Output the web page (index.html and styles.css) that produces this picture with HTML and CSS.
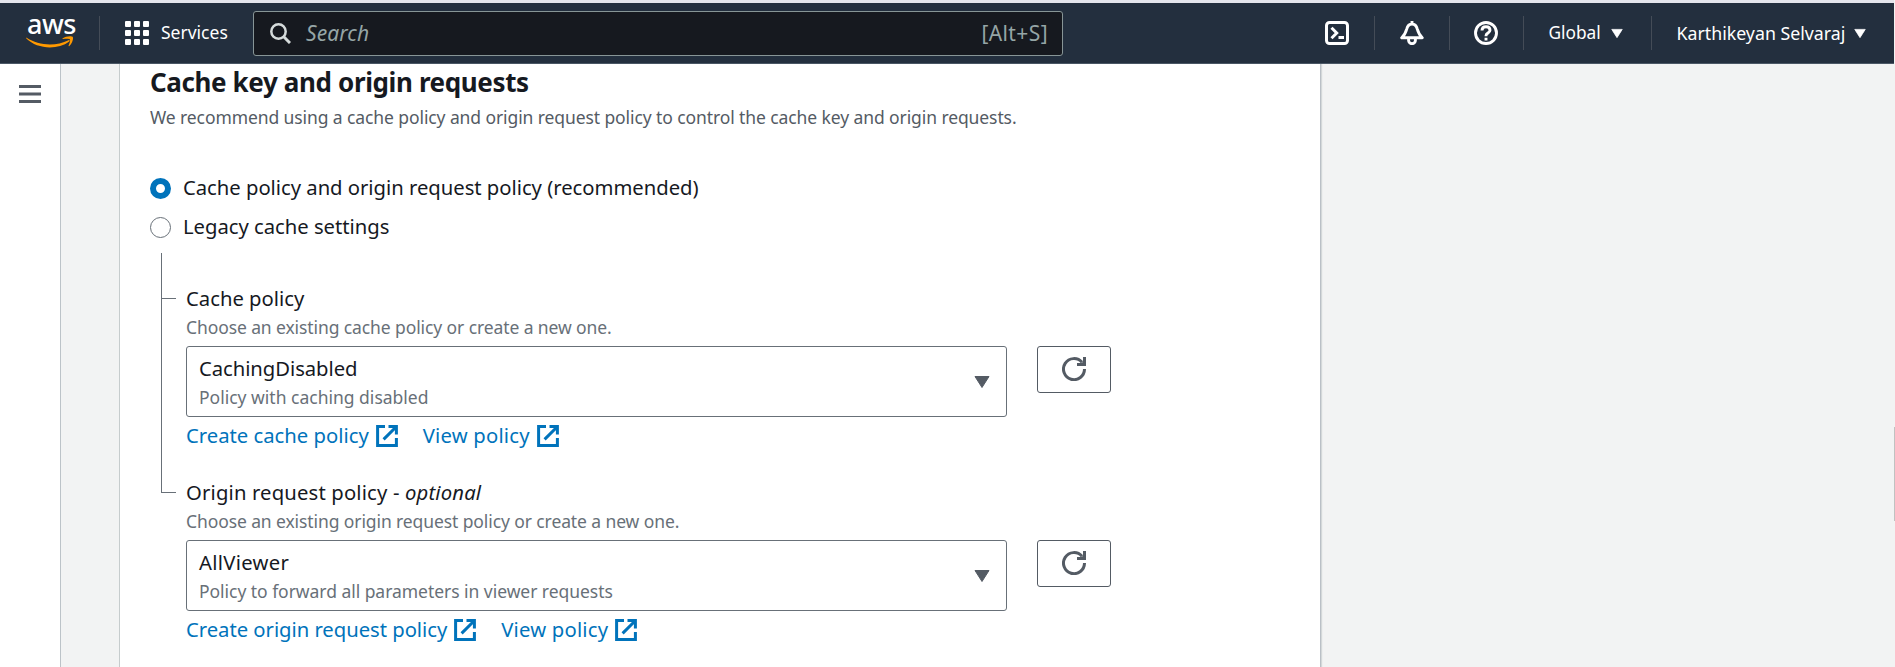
FILE: index.html
```html
<!DOCTYPE html>
<html lang="en">
<head>
<meta charset="utf-8">
<title>Cache key and origin requests</title>
<link rel="stylesheet" href="styles.css">
</head>
<body>
<svg width="0" height="0" class="defs">
  <symbol id="external" viewBox="0 0 22 22"><path d="M9 1.6H1.6V20.4H20.4V13M12.5 1.6h7.9V9.5M20 2L7.6 14.4" fill="none" stroke="currentColor" stroke-width="3"/></symbol>
  <symbol id="refresh" viewBox="0 0 24 24"><path d="M22.5 12A10.5 10.5 0 1 1 20 5.3" fill="none" stroke="currentColor" stroke-width="3"/><path d="M21 0h3v9h-9V6h4l2-1z" fill="currentColor"/></symbol>
  <symbol id="caret" viewBox="0 0 16 12"><path d="M1 .5h14L8 11.5z" fill="currentColor" stroke="currentColor" stroke-linejoin="round"/></symbol>
</svg>
<header class="topbar">
  <div class="logo">
    <span class="logo-text">aws</span>
    <svg class="smile" viewBox="0 18 48 12">
      <path d="M.3 19.5C13 28 30 28.500 42.500 22.200c1-.5 1.700.5.8 1.200C31 32.500 11 31 .3 20.500z" fill="#ff9900"/>
      <path d="M36.500 20.500c3-2.200 9-2.700 10.200-1.500 1.100 1.300-.5 6.500-3.300 9-.5.4-1 .1-.8-.4.900-2 2-5.200 1.300-6.200-.8-1-4.500-.6-6.700-.3-.7.1-1.100-.2-.7-.6z" fill="#ff9900"/>
    </svg>
  </div>
  <span class="sep sep-logo"></span>
  <svg class="apps" viewBox="0 0 24 24" fill="#fff"><rect width="6" height="6" rx="1"/><rect x="9" width="6" height="6" rx="1"/><rect x="18" width="6" height="6" rx="1"/><rect y="9" width="6" height="6" rx="1"/><rect x="9" y="9" width="6" height="6" rx="1"/><rect x="18" y="9" width="6" height="6" rx="1"/><rect y="18" width="6" height="6" rx="1"/><rect x="9" y="18" width="6" height="6" rx="1"/><rect x="18" y="18" width="6" height="6" rx="1"/></svg>
  <span class="services">Services</span>
  <div class="search">
    <svg class="search-icon" viewBox="0 0 21 21" fill="none" stroke="#d5dbdb"><circle cx="8.500" cy="8.500" r="7.200" stroke-width="2.500"/><path d="M13.500 13.500L20 20" stroke-width="3"/></svg>
    <span class="placeholder">Search</span>
    <span class="shortcut">[Alt+S]</span>
  </div>
  <nav class="tools">
    <svg class="tool" viewBox="0 0 24 24" fill="none" stroke="#fff" stroke-width="3"><rect x="1.500" y="1.500" width="21" height="21" rx="3"/><path d="M6.500 6.800L11.700 12l-5.200 5.200M13.500 16.500h5.500"/></svg>
    <span class="sep"></span>
    <svg class="tool" viewBox="0 0 24 24" fill="none" stroke="#fff" stroke-width="2.900"><path d="M12 0v3M1.700 16.800h20.600c-3-2.600-4-5-5-8.600C16.500 5 15 3 12 3S7.500 5 6.700 8.200c-1 3.600-2 6-5 8.600z" stroke-linejoin="round"/><path d="M8.600 17.500v2a3.400 3.200 0 0 0 6.800 0v-2"/></svg>
    <span class="sep"></span>
    <svg class="tool tool-help" viewBox="0 0 24 24" fill="none" stroke="#fff" stroke-width="2.900"><circle cx="12" cy="12" r="10.500"/><path d="M8 9.500C8 7 9.500 5.800 12 5.800s4 1.300 4 3.500c0 2.700-4 2.700-4 5.400v.5M12 16.800v2.700"/></svg>
    <span class="sep"></span>
    <span class="menu global">Global</span><svg class="menu-caret"><use href="#caret"/></svg>
    <span class="sep sep-user"></span>
    <span class="menu user">Karthikeyan Selvaraj</span><svg class="menu-caret"><use href="#caret"/></svg>
  </nav>
</header>
<div class="page">
  <aside class="rail"><svg class="burger" viewBox="0 0 22 18"><path d="M0 1.500h22M0 9h22M0 16.500h22" stroke="#545b64" stroke-width="3"/></svg></aside>
  <main class="panel">
    <h2 class="title">Cache key and origin requests</h2>
    <p class="intro">We recommend using a cache policy and origin request policy to control the cache key and origin requests.</p>
    <div class="option"><span class="radio checked"></span><span>Cache policy and origin request policy (recommended)</span></div>
    <div class="option"><span class="radio"></span><span>Legacy cache settings</span></div>
    <div class="tree">
      <div class="branch"><span class="stem"></span><span class="stem last"></span></div>
      <div class="fields">
        <section class="field">
          <div class="label">Cache policy</div>
          <div class="hint">Choose an existing cache policy or create a new one.</div>
          <div class="row">
            <div class="select"><div><div class="value">CachingDisabled</div><div class="sub">Policy with caching disabled</div></div><svg class="select-caret"><use href="#caret"/></svg></div>
            <div class="button"><svg class="refresh"><use href="#refresh"/></svg></div>
          </div>
          <div class="links"><a class="link">Create cache policy</a><svg class="ext"><use href="#external"/></svg><a class="link view">View policy</a><svg class="ext"><use href="#external"/></svg></div>
        </section>
        <section class="field">
          <div class="label label-optional">Origin request policy - <em>optional</em></div>
          <div class="hint">Choose an existing origin request policy or create a new one.</div>
          <div class="row">
            <div class="select"><div><div class="value value-wide">AllViewer</div><div class="sub sub-tight">Policy to forward all parameters in viewer requests</div></div><svg class="select-caret"><use href="#caret"/></svg></div>
            <div class="button"><svg class="refresh"><use href="#refresh"/></svg></div>
          </div>
          <div class="links"><a class="link link-tight">Create origin request policy</a><svg class="ext"><use href="#external"/></svg><a class="link view">View policy</a><svg class="ext"><use href="#external"/></svg></div>
        </section>
      </div>
    </div>
  </main>
  <div class="gutter"><span class="thumb"></span></div>
</div>
</body>
</html>
```
FILE: styles.css
```css
* { box-sizing: border-box; }
body { margin: 0; height: 667px; overflow: hidden; background: #f2f3f3; color: #16191f; font-family: "Noto Sans", sans-serif; font-size: 20.25px; line-height: 26px; white-space: nowrap; }
svg { display: block; flex: none; }
.defs { position: absolute; }
.topbar { display: flex; align-items: center; height: 64px; margin-right: 1px; padding: 0 28px 0 26px; border-top: 3px solid #e4e5ec; border-bottom: 1px solid #4b5866; background: #232f3e; color: #fff; }
.logo { width: 48px; height: 58px; }
.logo-text { display: block; height: 32px; padding-left: 1px; font-size: 27px; line-height: 40px; letter-spacing: -.5px; font-weight: 500; }
.smile { width: 48px; height: 12px; }
.sep { flex: none; width: 1px; height: 34px; background: #444c57; }
.sep-logo { margin: 0 25px; }
.apps { width: 24px; height: 24px; }
.services { width: 94px; padding: 0 0 2px 12px; font-size: 17.5px; }
.search { display: flex; align-items: center; width: 810px; height: 45px; margin-left: 10px; padding: 0 14px 0 16px; border: 1px solid #879596; border-radius: 3px; background: #16191f; color: #95a5a6; flex: none; font-size: 21px; }
.search-icon { width: 21px; height: 21px; margin-right: 15px; }
.placeholder { font-style: italic; flex: 1; padding-bottom: 1px; letter-spacing: .1px; }
.shortcut { padding-bottom: 1px; letter-spacing: .4px; }
.tools { display: flex; align-items: center; margin-left: auto; }
.tool { width: 24px; height: 24px; margin: 0 25px; }
.tool:first-child { margin-left: 0; }
.tool-help { margin-left: 24px; }
.menu { font-size: 17.3px; width: 55px; margin-left: 25px; padding-bottom: 1px; }
.user { width: 169.500px; font-size: 17.75px; }
.menu-caret { width: 12px; height: 11px; margin-left: 8px; }
.global + .menu-caret { margin-left: 7px; margin-right: 1px; }
.sep-user { margin-left: 27px; }
.page { display: flex; height: 603px; }
.rail { width: 61px; flex: none; padding: 21px 0 0 19px; border-right: 1px solid #bcc3c8; background: #fff; }
.burger { width: 22px; height: 18px; }
.panel { width: 1202px; flex: none; margin-left: 58px; padding: 2px 0 0 30px; background: #fff; border-left: 1px solid #c6cccd; border-right: 1px solid #bac0c6; box-shadow: 1px 0 1px rgba(0, 28, 36, .12); }
.title { margin: 0; font-size: 26px; line-height: 32px; letter-spacing: -.375px; }
.intro { margin: 7px 0 45px; font-size: 17.5px; line-height: 24px; letter-spacing: -.095px; color: #545b64; }
.option { display: flex; align-items: flex-start; gap: 12px; height: 28px; margin-bottom: 11px; letter-spacing: -.02px; }
.radio { width: 21px; height: 21px; margin-top: 4px; border: 1.500px solid #687078; border-radius: 50%; }
.checked { border: 6.500px solid #0073bb; }
.tree { display: flex; margin-top: 12px; padding-left: 11px; }
.branch { width: 25px; flex: none; }
.stem { display: block; width: 15px; height: 46px; border-left: 1px solid #687078; border-bottom: 1px solid #687078; }
.last { height: 194px; }
.fields { padding-top: 32px; }
.field { margin-bottom: 31px; }
.label-optional { letter-spacing: .16px; }
.hint { margin: 4px 0 7px; letter-spacing: -.1px; }
.hint, .sub { font-size: 17.5px; line-height: 24px; color: #687078; }
.row { display: flex; align-items: flex-start; gap: 30px; }
.select { display: flex; align-items: center; justify-content: space-between; width: 821px; height: 71px; padding: 0 16px 0 12px; border: 1px solid #687078; border-radius: 3px; }
.value { letter-spacing: -.05px; }
.value-wide { letter-spacing: .3px; }
.sub { margin-top: 4px; }
.sub-tight { letter-spacing: -.04px; }
.select-caret { width: 16px; height: 12px; color: #545b64; }
.button { display: flex; justify-content: center; width: 74px; height: 47px; padding-top: 10px; border: 1px solid #545b64; border-radius: 3px; color: #545b64; }
.refresh { width: 24px; height: 24px; }
.links { display: flex; margin-top: 5px; color: #0073bb; }
.link { margin-right: 7px; }
.link-tight { letter-spacing: -.03px; }
.view { margin-left: 25px; letter-spacing: .2px; }
.ext { width: 22px; height: 22px; margin-top: 3px; }
.gutter { display: flex; flex: 1; justify-content: flex-end; }
.thumb { width: 1px; height: 94px; margin-top: 363px; background: #c1c1c1; }
```
